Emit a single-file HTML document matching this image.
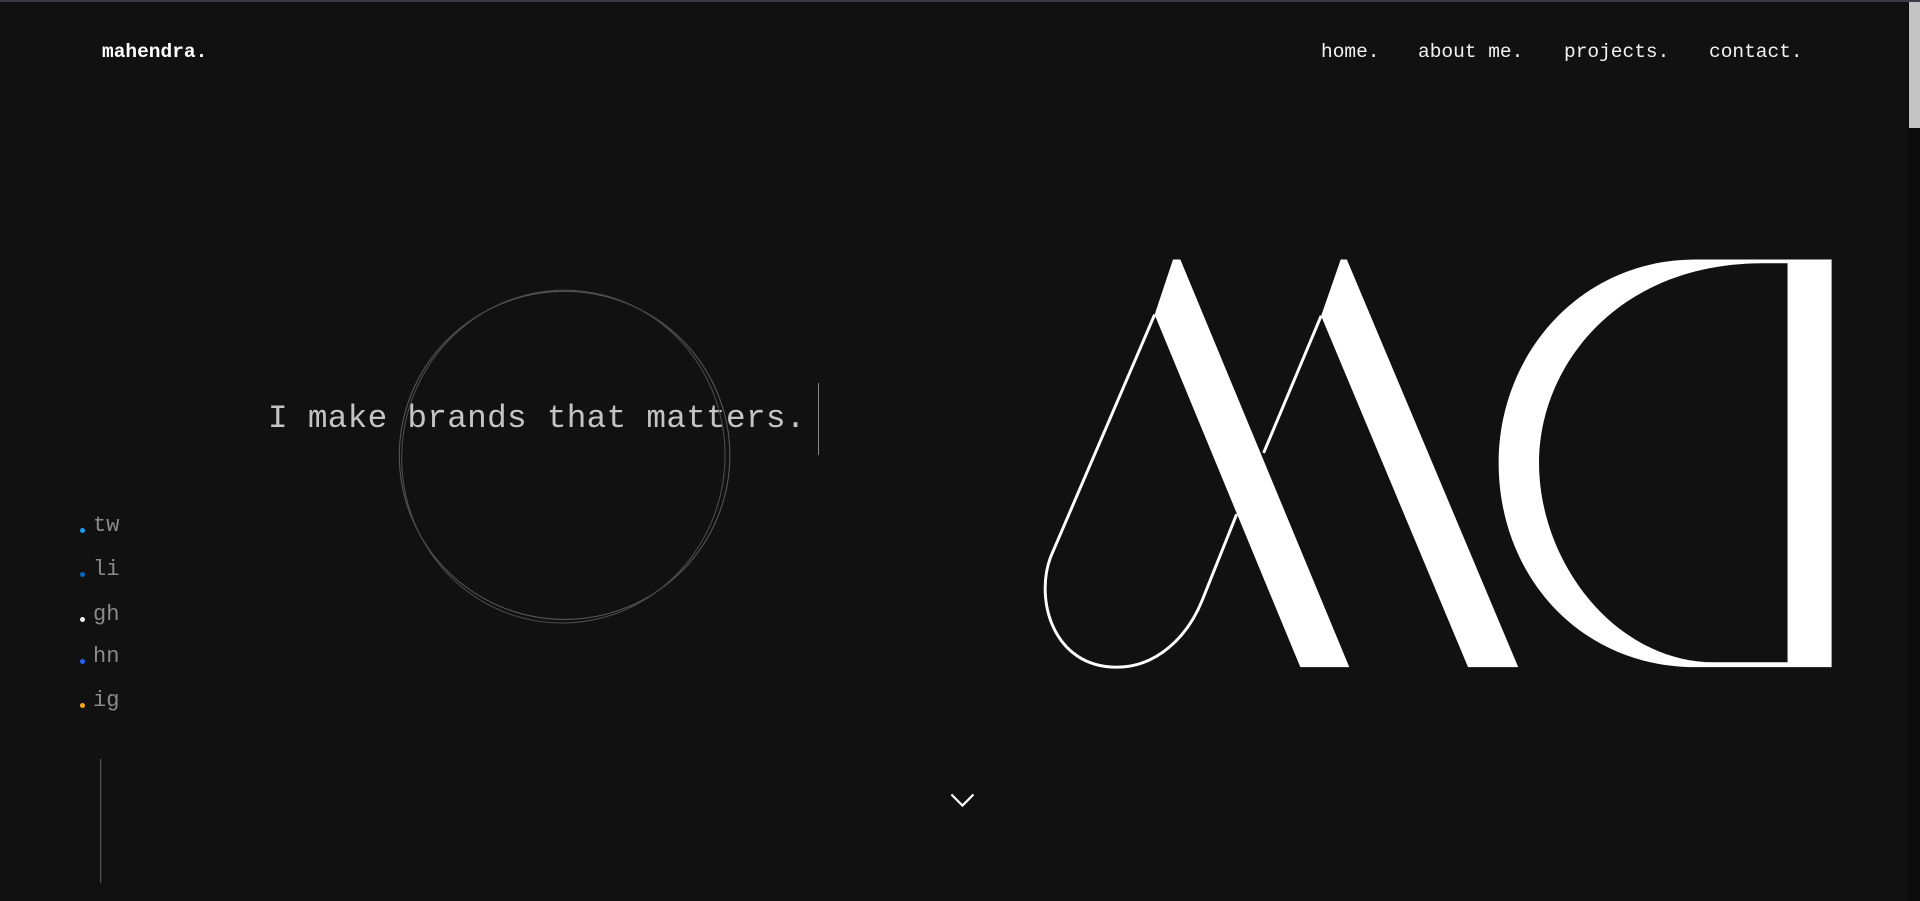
<!DOCTYPE html>
<html><head><meta charset="utf-8"><style>
html,body{margin:0;padding:0;background:#111;width:1920px;height:901px;overflow:hidden;position:relative;font-family:"Liberation Mono",monospace}
.t{position:absolute;white-space:nowrap;line-height:1}
.nav{font-size:19.5px;color:#f2f2f2;top:43px}
.soc{font-size:22px;color:#8a8a8a;left:93px}
.dot{position:absolute;width:5px;height:5px;border-radius:50%;left:80px}
</style></head><body>
<div style="position:absolute;left:0;top:0;width:1920px;height:2px;background:#3b3b46"></div>
<div style="position:absolute;left:1908px;top:2px;width:12px;height:899px;background:#0b0b0b"></div>
<div style="position:absolute;left:1909px;top:2px;width:11px;height:126px;background:#c4c4c4"></div>
<div class="t" style="left:102px;top:43px;font-size:19.5px;font-weight:bold;color:#fff">mahendra.</div>
<div class="t nav" style="left:1321px">home.</div>
<div class="t nav" style="left:1418px">about me.</div>
<div class="t nav" style="left:1564px">projects.</div>
<div class="t nav" style="left:1709px">contact.</div>
<div class="t" style="left:268px;top:403px;font-size:32.7px;color:#c4c4c4;letter-spacing:0.3px">I make brands that matters.</div>
<div style="position:absolute;left:818px;top:383px;width:1px;height:72px;background:#888"></div>
<div class="t soc" style="top:515px">tw</div><div class="dot" style="top:528px;background:#1d9bf0"></div>
<div class="t soc" style="top:559px">li</div><div class="dot" style="top:572px;background:#0a66c2"></div>
<div class="t soc" style="top:604px">gh</div><div class="dot" style="top:617px;background:#eee"></div>
<div class="t soc" style="top:646px">hn</div><div class="dot" style="top:659px;background:#2962ff"></div>
<div class="t soc" style="top:690px">ig</div><div class="dot" style="top:703px;background:#f5a623"></div>
<svg style="position:absolute;left:0;top:0" width="1920" height="901" viewBox="0 0 1568 736">
<line x1="82" y1="620" x2="82" y2="721" stroke="#555" stroke-width="1"/>
<ellipse cx="461" cy="372" rx="135" ry="134" fill="none" stroke="#555" stroke-width="0.9"/>
<ellipse cx="460" cy="373" rx="132" ry="136" fill="none" stroke="#4a4a4a" stroke-width="0.9" transform="rotate(8 460 373)"/>
<polyline points="777,649 786,658 795,649" fill="none" stroke="#fff" stroke-width="1.8"/>
<g fill="#fff">
<path d="M958,212 L964,212 L1102,545 L1062,545 L943,257 Z"/>
<path d="M1095,212 L1100,212 L1240,545 L1199,545 L1079,258 Z"/>
<path fill-rule="evenodd" d="M1496,212 L1385,212 C1290,212 1224,290 1224,378 C1224,470 1290,545 1385,545 L1496,545 Z M1460,215 L1440,215 C1320,215 1257,300 1257,378 C1257,460 1320,541 1400,541 L1460,541 Z"/>
</g>
<path d="M943,257 L858,455 C845,490 860,545 912,545 C945,545 970,520 982,490 L1010,420 M1032,370 L1079,258" fill="none" stroke="#fff" stroke-width="2.4"/>
</svg>
</body></html>
